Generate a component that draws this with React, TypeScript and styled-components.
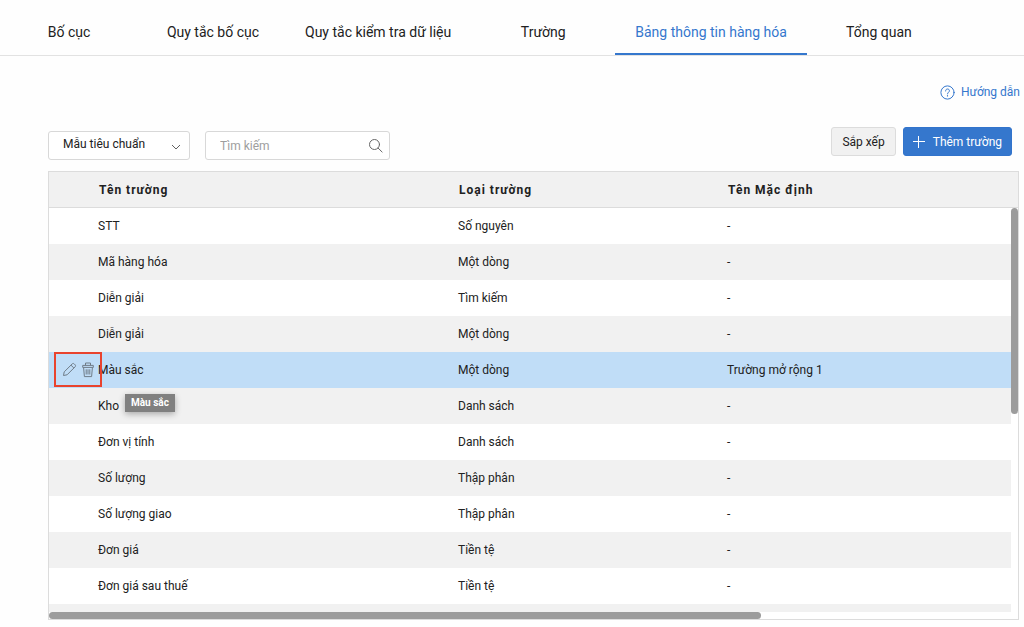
import React from "react";
import styled, { createGlobalStyle } from "styled-components";

const GlobalStyle = createGlobalStyle`
  *, *::before, *::after { box-sizing: border-box; }
  body {
    margin: 0;
    background: #fefefe;
    color: #212121;
    font-family: Roboto, "Liberation Sans", sans-serif;
    font-size: 12px;
  }
  button, input, select { font: inherit; color: inherit; }
`;

const Page = styled.div`
  display: flex;
  flex-direction: column;
  height: 100vh;
  padding-bottom: 7px;
  overflow: hidden;
`;

const TabBar = styled.nav`
  display: flex;
  flex: none;
  height: 56px;
  margin-left: -3px;
  padding-top: 8px;
  border-bottom: 1px solid #e2e2e2;
`;

const Tab = styled.a<{ $active?: boolean }>`
  display: flex;
  align-items: center;
  justify-content: center;
  min-width: 144px;
  padding: 2px 20px 0;
  border-bottom: 2px solid ${(p) => (p.$active ? "#3577cd" : "transparent")};
  color: ${(p) => (p.$active ? "#3577cd" : "#212121")};
  font-size: 14px;
  line-height: 20px;
  white-space: nowrap;
  text-decoration: none;
`;

const HelpRow = styled.div`
  display: flex;
  justify-content: flex-end;
  flex: none;
  padding: 28px 4px 0;
`;

const HelpLink = styled.a`
  display: flex;
  align-items: center;
  gap: 6px;
  color: #3577cd;
  line-height: 16px;
  text-decoration: none;
`;

const Toolbar = styled.div`
  display: flex;
  align-items: flex-start;
  justify-content: space-between;
  flex: none;
  padding: 27px 12px 11px 48px;
`;

const Filters = styled.div`
  display: flex;
  gap: 15px;
  padding-top: 4px;
`;

const Actions = styled.div`
  display: flex;
  gap: 7px;
`;

const SelectBox = styled.label`
  display: flex;
  position: relative;
  width: 142px;
  height: 29px;

  svg {
    position: absolute;
    right: 9px;
    top: 13px;
    pointer-events: none;
  }
`;

const Select = styled.select`
  appearance: none;
  width: 100%;
  padding: 0 24px 3px 14px;
  border: 1px solid #d8d8d8;
  border-radius: 3px;
  background: #fff;
`;

const SearchBox = styled.label`
  display: flex;
  align-items: center;
  width: 185px;
  height: 29px;
  padding: 0 6px 0 14px;
  border: 1px solid #d8d8d8;
  border-radius: 3px;
  background: #fff;
`;

const SearchInput = styled.input`
  flex: 1;
  min-width: 0;
  padding: 0;
  border: 0;
  outline: 0;
  background: none;

  &::placeholder { color: #9e9e9e; opacity: 1; }
`;

const Button = styled.button<{ $primary?: boolean }>`
  display: flex;
  align-items: center;
  gap: 8px;
  height: 29px;
  padding: 0 ${(p) => (p.$primary ? "9px" : "10px")};
  border: 1px solid ${(p) => (p.$primary ? "#3274cc" : "#dcdcdc")};
  border-radius: 3px;
  background: ${(p) => (p.$primary ? "#3577cd" : "#f1f1f1")};
  color: ${(p) => (p.$primary ? "#fff" : "#212121")};
  white-space: nowrap;
`;

const Panel = styled.div`
  position: relative;
  flex: 1;
  min-height: 0;
  margin: 0 5px 0 48px;
  border: 1px solid #dcdcdc;
  background: #fff;
  overflow: hidden;
`;

const Table = styled.table`
  width: 100%;
  border-collapse: separate;
  border-spacing: 0;
  table-layout: fixed;
`;

const HeadCell = styled.th<{ $width?: string }>`
  width: ${(p) => p.$width ?? "auto"};
  height: 36px;
  padding: 0 1px;
  border-bottom: 1px solid #dcdcdc;
  background: #f1f1f1;
  font-weight: 700;
  letter-spacing: 1px;
  text-align: left;
`;

const Row = styled.tr<{ $selected?: boolean }>`
  height: 36px;
  background: ${(p) => (p.$selected ? "#c0ddf7" : "#fff")};

  &:nth-child(even) { background: #f1f1f1; }
`;

const Cell = styled.td`
  position: relative;
  padding: 0;
  white-space: nowrap;
`;

const RowActions = styled.div`
  position: absolute;
  z-index: 1;
  top: 0;
  left: 5px;
  display: flex;
  align-items: center;
  justify-content: center;
  gap: 4px;
  width: 48px;
  height: 35px;
  border: 2px solid #e8432e;
`;

const IconButton = styled.button`
  display: flex;
  padding: 0;
  border: 0;
  background: none;
`;

const Tooltip = styled.span`
  position: absolute;
  z-index: 2;
  top: 42px;
  left: 27px;
  padding: 0 6px;
  background: #808080;
  box-shadow: 0 2px 6px rgba(0, 0, 0, 0.3);
  color: #fff;
  font-size: 10px;
  font-weight: 700;
  line-height: 18px;
`;

const VerticalTrack = styled.div`
  position: absolute;
  top: 36px;
  right: 0;
  bottom: 0;
  width: 7px;
  background: #fff;
`;

const HorizontalTrack = styled.div`
  position: absolute;
  right: 0;
  bottom: 0;
  left: 0;
  height: 7px;
  background: #fff;
`;

const Thumb = styled.div<{ $width?: string; $height?: string }>`
  width: ${(p) => p.$width ?? "100%"};
  height: ${(p) => p.$height ?? "100%"};
  border-radius: 4px;
  background: #9c9c9c;
`;

const HelpIcon = () => (
  <svg width="15" height="15" viewBox="0 0 15 15" fill="none" stroke="#3577cd" strokeLinecap="round" aria-hidden="true">
    <circle cx="7.5" cy="7.5" r="6.6" />
    <path d="M5.6 6c0-1.2.8-2 1.9-2s1.9.7 1.9 1.8c0 1.5-1.9 1.5-1.9 3.1" />
    <path d="M7.5 10.7v.3" strokeWidth="1.2" />
  </svg>
);

const ChevronIcon = () => (
  <svg width="10" height="7" viewBox="0 0 10 7" fill="none" stroke="#616161" aria-hidden="true">
    <path d="M1 1l4 4 4-4" />
  </svg>
);

const SearchIcon = () => (
  <svg width="15" height="15" viewBox="0 0 15 15" fill="none" stroke="#666" strokeLinecap="round" aria-hidden="true">
    <circle cx="6.5" cy="6.5" r="5" />
    <path d="M10.1 10.1l4 3.9" />
  </svg>
);

const PlusIcon = () => (
  <svg width="12" height="12" viewBox="0 0 12 12" fill="none" stroke="#fff" aria-hidden="true">
    <path d="M5.5 0v12M0 5.5h12" />
  </svg>
);

const PencilIcon = () => (
  <svg width="15" height="15" viewBox="0 0 15 15" fill="none" stroke="#6f7c88" strokeLinejoin="round" aria-hidden="true">
    <path d="M1.5 13.5l.7-3.6 7.9-7.9c.7-.7 1.5-.7 2.1-.1l.9.9c.6.6.6 1.4-.1 2.1l-7.9 7.9z" />
    <path d="M9 3.2L11.9 6" />
  </svg>
);

const TrashIcon = () => (
  <svg width="14" height="16" viewBox="0 0 14 16" fill="none" stroke="#6f7c88" strokeLinejoin="round" aria-hidden="true">
    <path d="M4.5 3.3V1h5v2.3M1.7 3.4h10.6v2H1.7zM2.6 5.6l.8 9h7.2l.8-9" />
    <path d="M5.2 7.3v5.2M7 7.3v5.2M8.8 7.3v5.2" />
  </svg>
);

const tabs = ["Bố cục", "Quy tắc bố cục", "Quy tắc kiểm tra dữ liệu", "Trường", "Bảng thông tin hàng hóa", "Tổng quan"];
const activeTab = "Bảng thông tin hàng hóa";

const fields = [
  { name: "STT", type: "Số nguyên", base: "-" },
  { name: "Mã hàng hóa", type: "Một dòng", base: "-" },
  { name: "Diễn giải", type: "Tìm kiếm", base: "-" },
  { name: "Diễn giải", type: "Một dòng", base: "-" },
  { name: "Màu sắc", type: "Một dòng", base: "Trường mở rộng 1", selected: true },
  { name: "Kho", type: "Danh sách", base: "-" },
  { name: "Đơn vị tính", type: "Danh sách", base: "-" },
  { name: "Số lượng", type: "Thập phân", base: "-" },
  { name: "Số lượng giao", type: "Thập phân", base: "-" },
  { name: "Đơn giá", type: "Tiền tệ", base: "-" },
  { name: "Đơn giá sau thuế", type: "Tiền tệ", base: "-" },
  { name: "", type: "", base: "" },
];

export default function App() {
  return (
    <>
      <GlobalStyle />
      <Page>
        <TabBar>
          {tabs.map((tab) => (
            <Tab key={tab} href="#" $active={tab === activeTab}>
              {tab}
            </Tab>
          ))}
        </TabBar>
        <HelpRow>
          <HelpLink href="#">
            <HelpIcon />
            Hướng dẫn
          </HelpLink>
        </HelpRow>
        <Toolbar>
          <Filters>
            <SelectBox>
              <Select aria-label="Mẫu">
                <option>Mẫu tiêu chuẩn</option>
              </Select>
              <ChevronIcon />
            </SelectBox>
            <SearchBox>
              <SearchInput type="text" placeholder="Tìm kiếm" aria-label="Tìm kiếm" />
              <SearchIcon />
            </SearchBox>
          </Filters>
          <Actions>
            <Button type="button">Sắp xếp</Button>
            <Button type="button" $primary>
              <PlusIcon />
              Thêm trường
            </Button>
          </Actions>
        </Toolbar>
        <Panel>
          <Table>
            <thead>
              <tr>
                <HeadCell $width="49px" />
                <HeadCell $width="360px">Tên trường</HeadCell>
                <HeadCell $width="269px">Loại trường</HeadCell>
                <HeadCell>Tên Mặc định</HeadCell>
              </tr>
            </thead>
            <tbody>
              {fields.map((field, index) => (
                <Row key={index} $selected={field.selected}>
                  <Cell>
                    {field.selected && (
                      <RowActions>
                        <IconButton type="button" aria-label="Sửa">
                          <PencilIcon />
                        </IconButton>
                        <IconButton type="button" aria-label="Xóa">
                          <TrashIcon />
                        </IconButton>
                      </RowActions>
                    )}
                  </Cell>
                  <Cell>
                    {field.name}
                    {field.selected && <Tooltip role="tooltip">{field.name}</Tooltip>}
                  </Cell>
                  <Cell>{field.type}</Cell>
                  <Cell>{field.base}</Cell>
                </Row>
              ))}
            </tbody>
          </Table>
          <VerticalTrack>
            <Thumb $height="50%" />
          </VerticalTrack>
          <HorizontalTrack>
            <Thumb $width="73.5%" />
          </HorizontalTrack>
        </Panel>
      </Page>
    </>
  );
}
